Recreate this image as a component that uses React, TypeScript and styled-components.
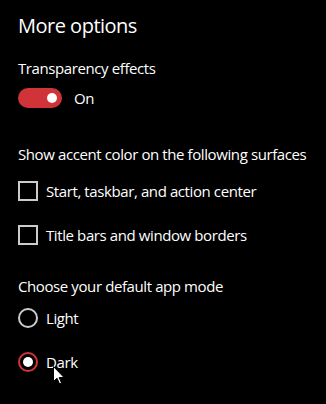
import React from "react";
import styled, { createGlobalStyle } from "styled-components";

const GlobalStyle = createGlobalStyle`
  html, body {
    margin: 0;
    padding: 0;
    background: #000;
  }
  body {
    font-family: "Open Sans", "Noto Sans", sans-serif;
    color: #fff;
  }
`;

const Page = styled.section`
  position: relative;
  width: 326px;
  height: 404px;
  box-sizing: border-box;
  padding: 12px 0 0 18px;
  background: #000;
  overflow: hidden;
`;

const Title = styled.h1`
  margin: 0;
  font-size: 20px;
  font-weight: 400;
  line-height: 28px;
  letter-spacing: -0.5px;
`;

const Label = styled.div<{ $top: number }>`
  margin-top: ${(p) => p.$top}px;
  font-size: 15px;
  line-height: 20px;
  letter-spacing: -0.4px;
`;

const Row = styled.label<{ $top: number }>`
  display: flex;
  align-items: center;
  gap: 8px;
  height: 20px;
  margin-top: ${(p) => p.$top}px;
  font-size: 15px;
  letter-spacing: -0.4px;
`;

const Toggle = styled.span<{ $on: boolean }>`
  position: relative;
  width: 44px;
  height: 20px;
  border-radius: 10px;
  box-sizing: border-box;
  background: ${(p) => (p.$on ? "#d13438" : "transparent")};
  border: ${(p) => (p.$on ? "none" : "2px solid #ccc")};
  margin-right: 4px;

  &::after {
    content: "";
    position: absolute;
    top: 5px;
    left: ${(p) => (p.$on ? "29px" : "5px")};
    width: 10px;
    height: 10px;
    border-radius: 50%;
    background: #fff;
  }
`;

const Box = styled.span`
  width: 20px;
  height: 20px;
  box-sizing: border-box;
  border: 2px solid #cccccc;
`;

const Radio = styled.span<{ $checked: boolean }>`
  display: flex;
  align-items: center;
  justify-content: center;
  width: 20px;
  height: 20px;
  box-sizing: border-box;
  border-radius: 50%;
  border: 2px solid ${(p) => (p.$checked ? "#d13438" : "#cccccc")};

  &::after {
    content: "";
    display: ${(p) => (p.$checked ? "block" : "none")};
    width: 10px;
    height: 10px;
    border-radius: 50%;
    background: #fff;
  }
`;

const Cursor = styled.svg`
  position: absolute;
  left: 53px;
  top: 366px;
`;

export default function App() {
  return (
    <>
      <GlobalStyle />
      <Page>
        <Title>More options</Title>
        <Label $top={18}>Transparency effects</Label>
        <Row $top={10}>
          <Toggle $on />
          On
        </Row>
        <Label $top={36}>Show accent color on the following surfaces</Label>
        <Row $top={17}>
          <Box />
          Start, taskbar, and action center
        </Row>
        <Row $top={24}>
          <Box />
          Title bars and window borders
        </Row>
        <Label $top={31}>Choose your default app mode</Label>
        <Row $top={12}>
          <Radio $checked={false} />
          Light
        </Row>
        <Row $top={24}>
          <Radio $checked />
          Dark
        </Row>
        <Cursor width="12" height="19" viewBox="0 0 12 19">
          <path
            d="M0.5 0.5 L0.5 15.5 L4 12.2 L6.6 18 L8.6 17.1 L6.1 11.5 L11 11.5 Z"
            fill="#fff"
            stroke="#000"
            strokeWidth="1"
          />
        </Cursor>
      </Page>
    </>
  );
}
